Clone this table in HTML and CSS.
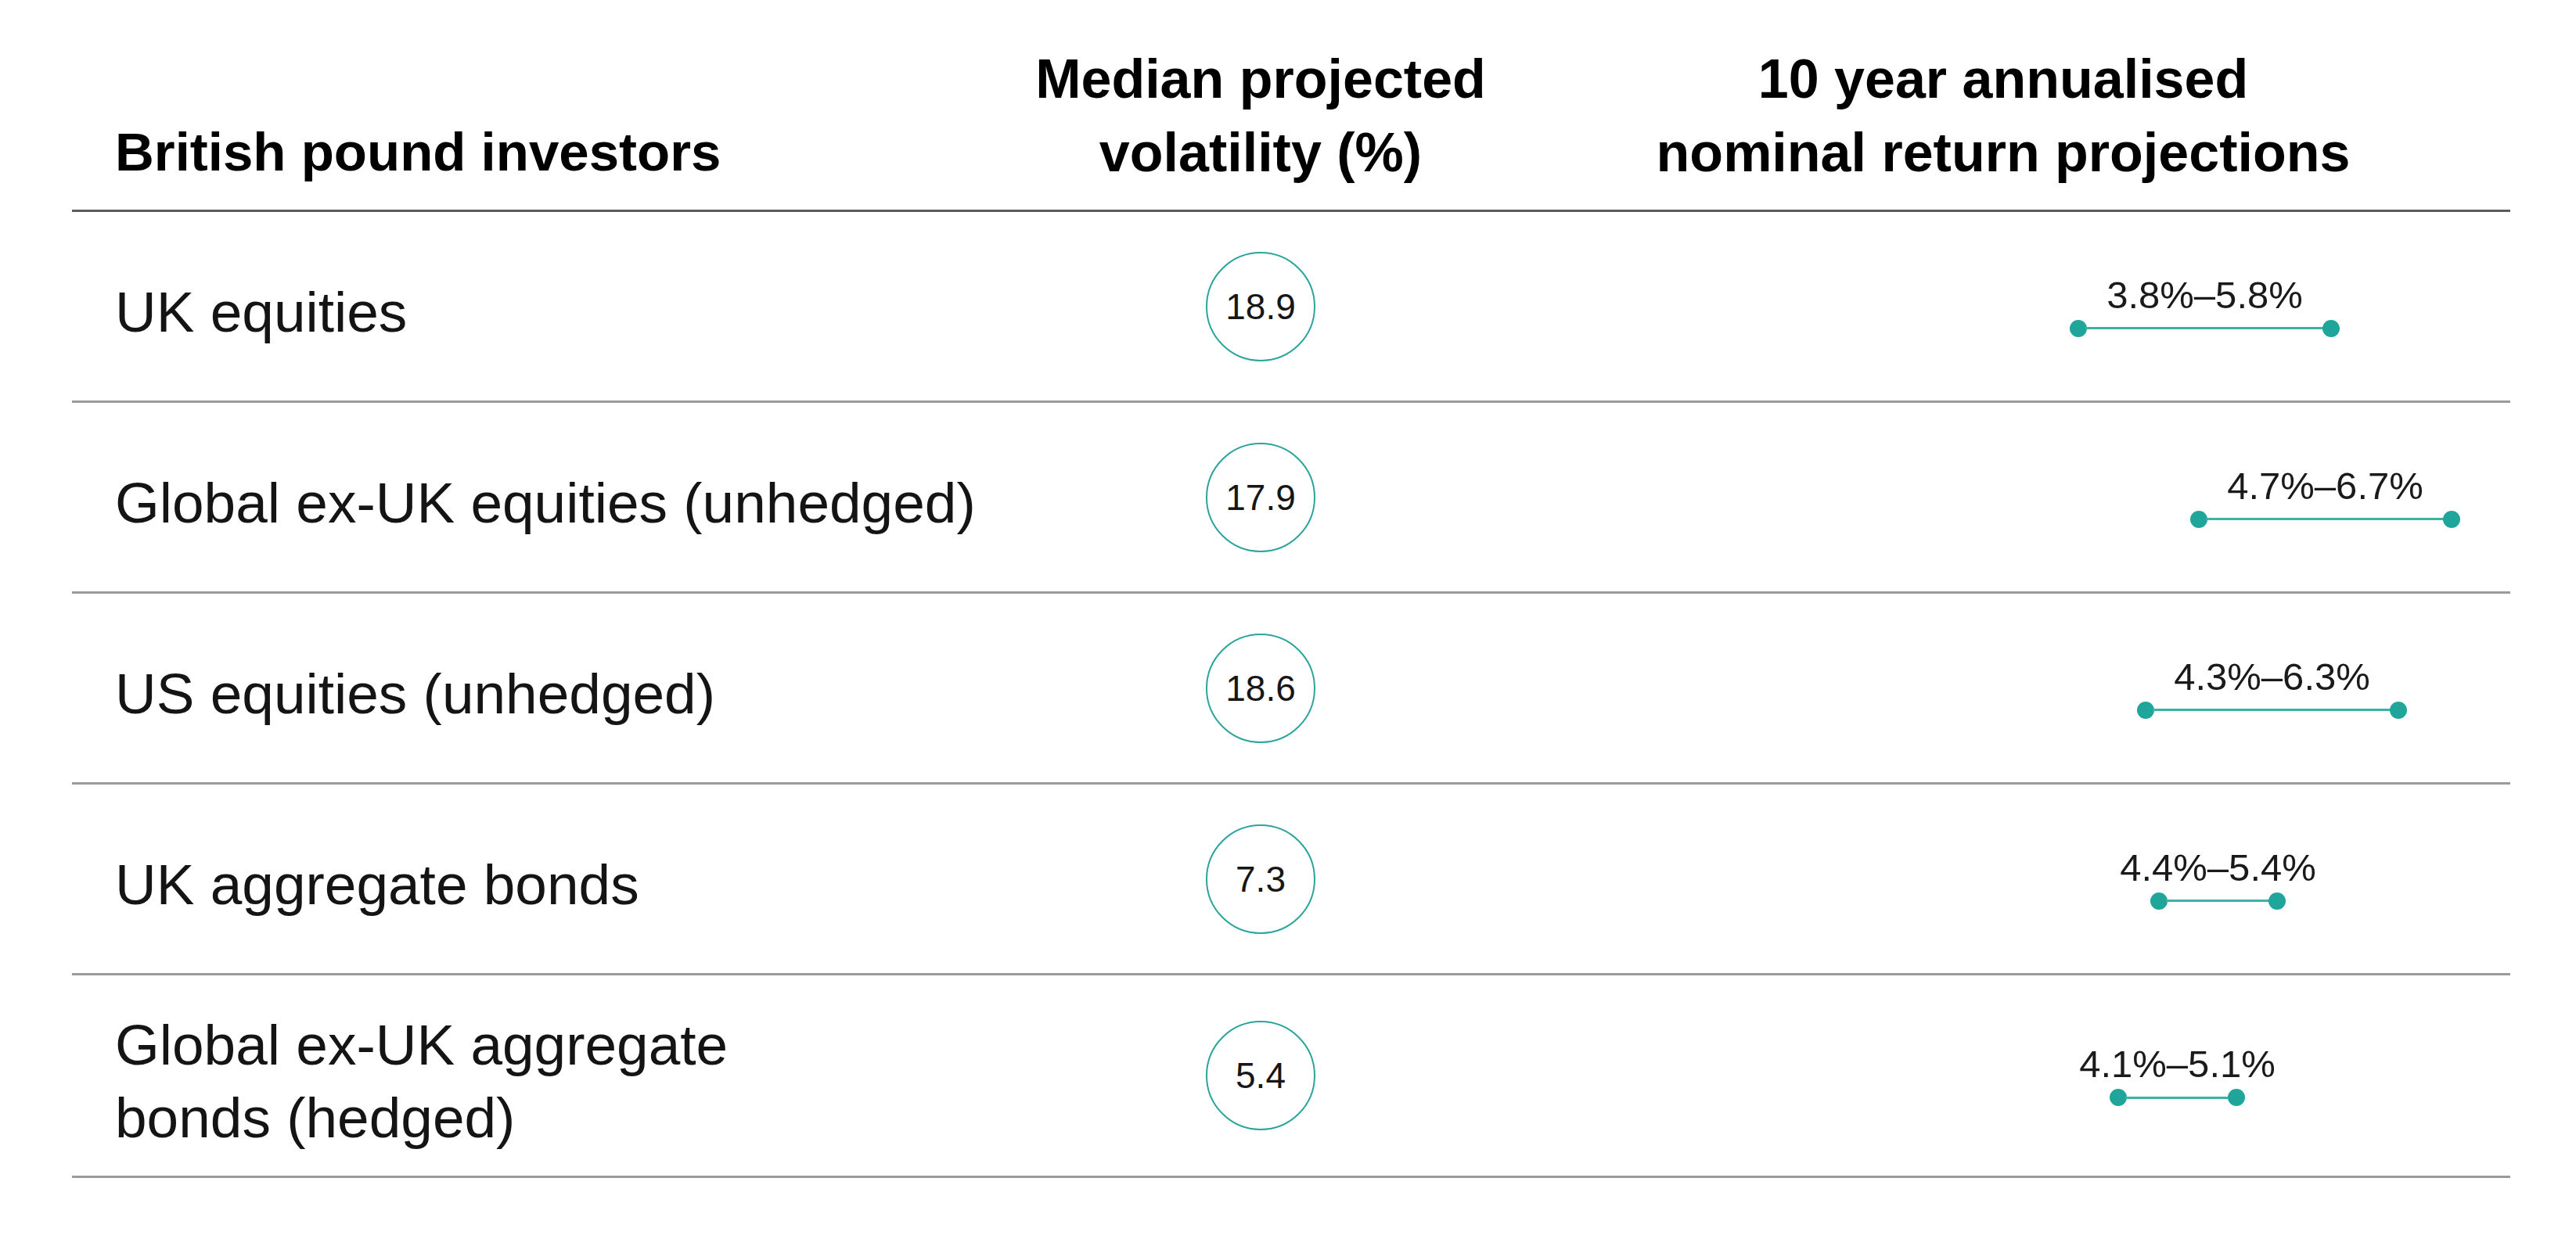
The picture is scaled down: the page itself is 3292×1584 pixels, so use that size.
FILE: index.html
```html
<!DOCTYPE html>
<html lang="en">
<head>
<meta charset="utf-8">
<title>British pound investors – projections</title>
<link rel="stylesheet" href="styles.css">
</head>
<body>
<div class="table">
  <div class="row head">
    <div class="cell c1">British pound investors</div>
    <div class="cell c2">Median projected<br>volatility (%)</div>
    <div class="cell c3">10 year annualised<br>nominal return projections</div>
  </div>

  <div class="row">
    <div class="cell c1">UK equities</div>
    <div class="cell c2"><span class="vol">18.9</span></div>
    <div class="cell c3">
      <div class="range" style="margin-left:733px;width:345px">
        <span class="label">3.8%–5.8%</span>
        <span class="bar"><i class="dot"></i><i class="line"></i><i class="dot"></i></span>
      </div>
    </div>
  </div>

  <div class="row">
    <div class="cell c1">Global ex-UK equities (unhedged)</div>
    <div class="cell c2"><span class="vol">17.9</span></div>
    <div class="cell c3">
      <div class="range" style="margin-left:887px;width:345px">
        <span class="label">4.7%–6.7%</span>
        <span class="bar"><i class="dot"></i><i class="line"></i><i class="dot"></i></span>
      </div>
    </div>
  </div>

  <div class="row">
    <div class="cell c1">US equities (unhedged)</div>
    <div class="cell c2"><span class="vol">18.6</span></div>
    <div class="cell c3">
      <div class="range" style="margin-left:819px;width:345px">
        <span class="label">4.3%–6.3%</span>
        <span class="bar"><i class="dot"></i><i class="line"></i><i class="dot"></i></span>
      </div>
    </div>
  </div>

  <div class="row">
    <div class="cell c1">UK aggregate bonds</div>
    <div class="cell c2"><span class="vol">7.3</span></div>
    <div class="cell c3">
      <div class="range" style="margin-left:836px;width:173px">
        <span class="label">4.4%–5.4%</span>
        <span class="bar"><i class="dot"></i><i class="line"></i><i class="dot"></i></span>
      </div>
    </div>
  </div>

  <div class="row last">
    <div class="cell c1">Global ex-UK aggregate<br>bonds (hedged)</div>
    <div class="cell c2"><span class="vol">5.4</span></div>
    <div class="cell c3">
      <div class="range" style="margin-left:784px;width:173px">
        <span class="label">4.1%–5.1%</span>
        <span class="bar"><i class="dot"></i><i class="line"></i><i class="dot"></i></span>
      </div>
    </div>
  </div>
</div>
</body>
</html>
```

FILE: styles.css
```css
* { box-sizing: border-box; }

html, body {
  margin: 0;
  padding: 0;
  background: #ffffff;
}

body {
  font-family: "Liberation Sans", Arial, sans-serif;
  color: #141414;
}

.table {
  margin-left: 92px;
  width: 3116px;
}

.row {
  display: grid;
  grid-template-columns: 1218px 602px 1296px;
  height: 244px;
  border-bottom: 3px solid #9b9b9b;
  align-items: center;
}

.row.last {
  height: 259px;
}

.row.head {
  height: 271px;
  padding-top: 54px;
  padding-bottom: 26px;
  align-items: end;
  border-bottom: 3px solid #5c5c5c;
  font-weight: 700;
  font-size: 70px;
  line-height: 94px;
  color: #000;
}

.cell {
  display: flex;
  align-items: center;
}

.row .c1 {
  padding-left: 55px;
  padding-top: 14px;
  font-size: 73px;
  line-height: 93px;
}

.row.head .c1 {
  padding-top: 0;
  font-size: 69px;
  line-height: 94px;
}

.c2 {
  justify-content: center;
  text-align: center;
}

.row.head .c3 {
  justify-content: center;
  text-align: center;
}

.vol {
  display: flex;
  align-items: center;
  justify-content: center;
  width: 140px;
  height: 140px;
  border: 2.5px solid #2ba59c;
  border-radius: 50%;
  font-size: 46px;
  color: #161616;
}

.range {
  display: flex;
  flex-direction: column;
  align-items: center;
  gap: 7px;
}

.label {
  font-size: 49px;
  line-height: 49px;
  white-space: nowrap;
  color: #1a1a1a;
}

.bar {
  display: flex;
  align-items: center;
  width: 100%;
  height: 22px;
}

.dot {
  flex: none;
  width: 22px;
  height: 22px;
  border-radius: 50%;
  background: #1fa59a;
}

.line {
  flex: 1;
  height: 3px;
  margin: 0 -2px;
  background: #3fb0a6;
}
```
